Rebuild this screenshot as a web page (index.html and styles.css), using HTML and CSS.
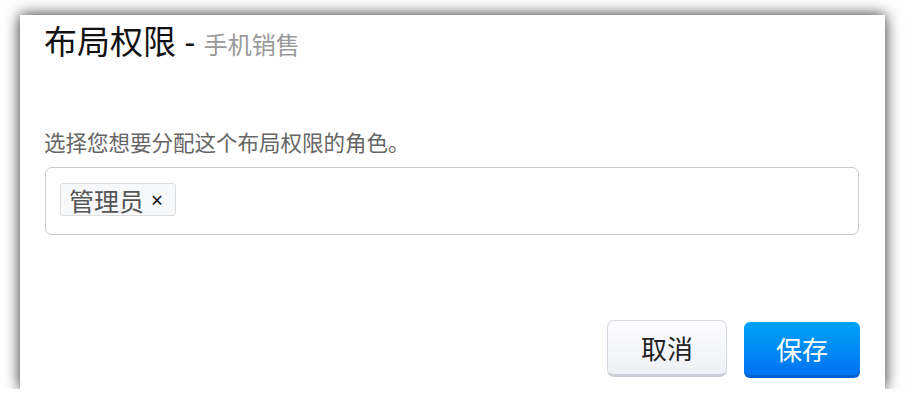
FILE: index.html
```html
<!DOCTYPE html>
<html lang="zh-CN">
<head>
    <meta charset="UTF-8">
    <meta name="viewport" content="width=device-width, initial-scale=1.0">
    <title>布局权限</title>
    <link rel="stylesheet" href="styles.css">
</head>
<body>
    <div class="dialog">
        <h1 class="dialog-title">布局权限 <span class="dash">-</span> <span class="subtitle">手机销售</span></h1>

        <p class="field-label">选择您想要分配这个布局权限的角色。</p>
        <div class="tag-input">
            <span class="tag">管理员 <span class="tag-remove">&times;</span></span>
        </div>

        <div class="dialog-footer">
            <button class="btn btn-cancel">取消</button>
            <button class="btn btn-save">保存</button>
        </div>
    </div>
</body>
</html>
```

FILE: styles.css
```css
body {
    margin: 0;
    background: #fff;
    font-family: "Noto Sans", "Noto Sans CJK SC", sans-serif;
}
.dialog {
    display: flex;
    flex-direction: column;
    box-sizing: border-box;
    width: 865px;
    height: 374px;
    margin: 15px 0 0 20px;
    padding: 7px 25px 11px 24px;
    background: #fff;
    box-shadow: 0 0 14px rgba(0, 0, 0, 0.85);
}
.dialog-title {
    margin: 0;
    font-size: 33px;
    font-weight: normal;
    line-height: 40px;
    color: #111;
}
.subtitle {
    font-size: 24px;
    color: #999;
}
.field-label {
    margin: 64px 0 0;
    font-size: 21.5px;
    line-height: 28px;
    color: #666;
}
.tag-input {
    box-sizing: border-box;
    height: 68px;
    margin: 10px 1px 0;
    padding: 15px 14px;
    border: 1px solid #ccc;
    border-radius: 7px;
}
.tag {
    display: inline-flex;
    align-items: center;
    box-sizing: border-box;
    height: 33px;
    padding: 0 12px 0 8px;
    background: #f7f8fa;
    border: 1px solid #dcdcdc;
    border-radius: 3px;
    font-size: 25px;
    color: #555;
}
.tag-remove {
    margin-left: 7px;
    font-size: 21px;
    color: #111;
}
.dialog-footer {
    display: flex;
    justify-content: flex-end;
    align-items: flex-end;
    gap: 17px;
    margin-top: auto;
}
.btn {
    font-family: inherit;
    font-size: 26px;
    cursor: pointer;
}
.btn-cancel {
    width: 120px;
    height: 57px;
    margin-bottom: 1px;
    background: linear-gradient(#fdfdff, #eef0f6);
    border: 1px solid #d5d8e0;
    border-bottom: 3px solid #c9cdd8;
    border-radius: 7px;
    color: #222;
}
.btn-save {
    width: 116px;
    height: 56px;
    background: linear-gradient(#00a3f6, #0073f2);
    border: none;
    border-bottom: 3px solid #0062d2;
    border-radius: 6px;
    color: #fff;
}
```
